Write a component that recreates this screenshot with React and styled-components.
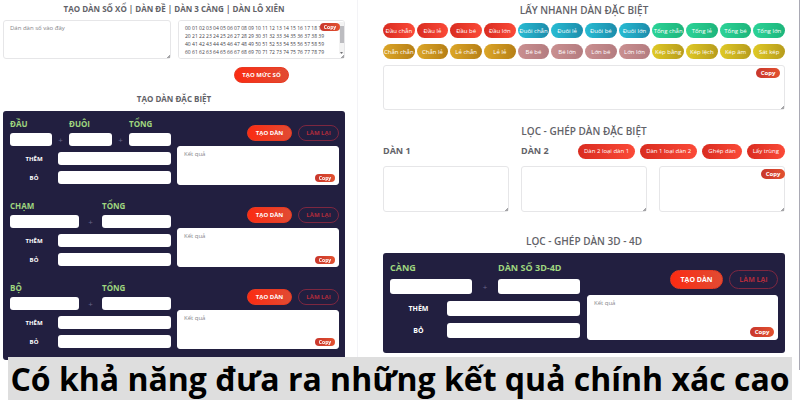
import { useState } from "react";
import styled, { createGlobalStyle } from "styled-components";

const GlobalStyle = createGlobalStyle`
  * {
    box-sizing: border-box;
  }
  body {
    margin: 0;
    background: #fff;
    color: #626268;
    font-family: "Open Sans", "Noto Sans", sans-serif;
  }
  button, input, textarea {
    font-family: inherit;
    margin: 0;
  }
`

const Columns = styled.main`
  display: grid;
  grid-template-columns: 358fr 442fr;
`

const LeftColumn = styled.div`
  padding: 0 12px 10px 3px;
  border-right: 1px solid #f3f3f6;
`

const RightColumn = styled.div`
  padding: 0 14px 0 25px;
  border-right: 1px solid #a9a9b4;
`

const Title = styled.h2`
  margin: 0;
  padding-top: ${({ $top }) => $top || 0}px;
  font-size: ${({ $large }) => ($large ? 10 : 8)}px;
  line-height: 16px;
  font-weight: ${({ $large }) => ($large ? 600 : 700)};
  text-align: center;
  white-space: nowrap;
`

const Row = styled.div`
  display: flex;
  align-items: center;
  justify-content: ${({ $justify }) => $justify || "flex-start"};
  gap: ${({ $gap }) => $gap || 0}px;
  margin-top: ${({ $top }) => $top || 0}px;
`

const Halves = styled.div`
  display: grid;
  grid-template-columns: 168fr 167fr;
  gap: 8px 7px;
  margin-top: 3px;
`

const BoxWrap = styled.div`
  position: relative;
  display: flex;
  flex: 1;
  min-width: 0;
  margin-top: ${({ $top }) => $top || 0}px;
`

const Area = styled.textarea`
  width: 100%;
  height: ${({ $height }) => $height}px;
  padding: 3px 6px;
  border: 1px solid ${({ $dark }) => ($dark ? "#fff" : "#e6e6e8")};
  border-radius: 3px;
  background: #fff;
  color: #44444a;
  font-size: ${({ $dense }) => ($dense ? 5 : 6)}px;
  line-height: 8px;
  resize: ${({ $dark }) => ($dark ? "none" : "vertical")};
  outline: none;

  &::placeholder {
    color: #85858a;
    opacity: 1;
  }
  &::-webkit-resizer {
    background: linear-gradient(135deg, transparent 87%, #a5a5a8 87%);
  }
`

const ScrollTrack = styled.span`
  position: absolute;
  top: 2px;
  right: 1px;
  bottom: 5px;
  display: flex;
  flex-direction: column;
  align-items: center;
  justify-content: space-between;
  width: 5px;
  padding-top: 4px;
  background: #f3f3f3;
  pointer-events: none;
`

const ScrollThumb = styled.span`
  width: 4px;
  height: 17px;
  background: #bcbcc0;
`

const CopyButton = styled.button`
  position: absolute;
  right: ${({ $right }) => $right}px;
  ${({ $low }) => ($low ? "bottom: 3px;" : "top: 3px;")}
  width: ${({ $small }) => ($small ? 20 : 24)}px;
  height: ${({ $small }) => ($small ? 8 : 10)}px;
  padding: 0;
  border: 0;
  border-radius: 5px;
  background: linear-gradient(90deg, #c8362c, #e2512f);
  color: #fff;
  font-size: ${({ $small }) => ($small ? 5 : 6)}px;
  line-height: 8px;
  font-weight: 700;
`

const MainButton = styled.button`
  width: ${({ $width }) => $width}px;
  height: ${({ $height }) => $height || 16}px;
  padding: 0;
  border: 1px solid ${({ $ghost }) => ($ghost ? "#7d2740" : "#e83a22")};
  border-radius: 10px;
  background: ${({ $ghost }) => ($ghost ? "transparent" : "linear-gradient(90deg, #fb2b12, #e14b33)")};
  color: ${({ $ghost }) => ($ghost ? "#b02c3c" : "#fff")};
  font-size: ${({ $size }) => $size || 6}px;
  line-height: 8px;
  font-weight: 700;
  white-space: nowrap;
`

const CenteredButton = styled(MainButton)`
  grid-column: 2;
  justify-self: center;
`

const PillGrid = styled.div`
  display: grid;
  grid-template-columns: repeat(12, 1fr);
  gap: 6px 2px;
  margin-top: 5px;
`

const pillColors = {
  red: "linear-gradient(90deg, #d92c20, #fb4a38)",
  blue: "linear-gradient(90deg, #27bcd3, #1c8cab)",
  green: "linear-gradient(90deg, #2bd397, #1db57b)",
  gold: "linear-gradient(90deg, #dca628, #b67f16)",
  rose: "linear-gradient(90deg, #c98f90, #b47c80)",
  yellow: "linear-gradient(90deg, #dfc926, #b79c1c)",
}

const Pill = styled.button`
  height: 15px;
  padding: 0 ${({ $pad }) => $pad || 0}px;
  border: 0;
  border-radius: 8px;
  background: ${({ $color }) => pillColors[$color]};
  color: #fff;
  font-size: 6px;
  line-height: 8px;
  white-space: nowrap;
`

const ListGrid = styled.div`
  display: grid;
  grid-template-columns: repeat(3, 1fr);
  column-gap: 12px;
  margin-top: 7px;
`

const ListHead = styled.div`
  display: grid;
  grid-template-columns: 138fr 57fr 207fr;
  align-items: center;
  margin-top: 4px;
`

const ListLabel = styled.label`
  font-size: 9px;
  line-height: 16px;
  font-weight: 700;
`

const Panel = styled.section`
  display: grid;
  gap: 8px;
  margin-top: 4px;
  padding: ${({ $large }) => ($large ? "8px 7px 13px" : "7px 6px 4px 7px")};
  border-radius: 3px;
  background: #221f40;
`

const Group = styled.div`
  display: grid;
  grid-template-columns: ${({ $large }) => ($large ? "190fr 191fr" : "161fr 162fr")};
  column-gap: ${({ $large }) => ($large ? 7 : 6)}px;
  min-height: ${({ $large }) => ($large ? 0 : 74)}px;
`

const FieldRow = styled.div`
  display: grid;
  grid-template-columns: ${({ $count, $large }) => {
    if ($large) return "82fr 26fr 82fr"
    return $count === 3 ? "42fr 17fr 43fr 17fr 42fr" : "69fr 23fr 69fr"
  }};
  align-items: end;
`

const Field = styled.div`
  display: grid;
  min-width: 0;
`

const FieldLabel = styled.label`
  color: #9fd67f;
  font-size: ${({ $large }) => ($large ? 9 : 8)}px;
  line-height: ${({ $large }) => ($large ? 14 : 12)}px;
  margin-bottom: ${({ $large }) => ($large ? 4 : 3)}px;
  font-weight: 700;
  white-space: nowrap;
`

const Input = styled.input`
  width: 100%;
  min-width: 0;
  height: ${({ $large }) => ($large ? 15 : 13)}px;
  padding: 0 4px;
  border: 0;
  border-radius: 3px;
  background: #fff;
  font-size: 6px;
`

const Plus = styled.span`
  color: #68658a;
  font-size: 8px;
  line-height: ${({ $large }) => ($large ? 15 : 13)}px;
  text-align: center;
`

const SideRow = styled.div`
  display: grid;
  grid-template-columns: ${({ $large }) => ($large ? "57fr 133fr" : "48fr 113fr")};
  align-items: center;
  margin-top: ${({ $large }) => ($large ? 7 : 6)}px;
`

const SideLabel = styled.label`
  color: #fff;
  font-size: ${({ $large }) => ($large ? 7 : 6)}px;
  line-height: 8px;
  font-weight: 700;
  text-align: center;
`

const Caption = styled.h1`
  position: relative;
  margin: -13px 8px 0;
  background: #dedede;
  color: #000;
  font-family: "Open Sans", "Noto Sans", sans-serif;
  font-size: 32px;
  line-height: 43px;
  font-weight: 700;
  text-align: center;
  white-space: nowrap;
`

const quickPicks = [
  ["Đầu chẵn", "red"],
  ["Đầu lẻ", "red"],
  ["Đầu bé", "red"],
  ["Đầu lớn", "red"],
  ["Đuôi chẵn", "blue"],
  ["Đuôi lẻ", "blue"],
  ["Đuôi bé", "blue"],
  ["Đuôi lớn", "blue"],
  ["Tổng chẵn", "green"],
  ["Tổng lẻ", "green"],
  ["Tổng bé", "green"],
  ["Tổng lớn", "green"],
  ["Chẵn chẵn", "gold"],
  ["Chẵn lẻ", "gold"],
  ["Lẻ chẵn", "gold"],
  ["Lẻ lẻ", "gold"],
  ["Bé bé", "rose"],
  ["Bé lớn", "rose"],
  ["Lớn bé", "rose"],
  ["Lớn lớn", "rose"],
  ["Kép bằng", "yellow"],
  ["Kép lệch", "yellow"],
  ["Kép âm", "yellow"],
  ["Sát kép", "yellow"],
]

const groups = [
  { id: "dau", fields: ["ĐẦU", "ĐUÔI", "TỔNG"] },
  { id: "cham", fields: ["CHẠM", "TỔNG"] },
  { id: "bo", fields: ["BỘ", "TỔNG"] },
]

// 00..99, twenty numbers on each line
const allNumbers = [0, 20, 40, 60, 80]
  .map((start) => Array.from({ length: 20 }, (_, i) => String(start + i).padStart(2, "0")).join(" "))
  .join("\n")

const FormGroup = ({ id, fields, large }) => (
  <Group $large={large}>
    <div>
      <FieldRow $count={fields.length} $large={large}>
        {fields.map((name, i) => [
          i > 0 && <Plus key={`plus-${i}`} $large={large}>+</Plus>,
          <Field key={name}>
            <FieldLabel htmlFor={`${id}-${i}`} $large={large}>{name}</FieldLabel>
            <Input id={`${id}-${i}`} $large={large} />
          </Field>,
        ])}
      </FieldRow>
      <SideRow $large={large}>
        <SideLabel htmlFor={`${id}-them`} $large={large}>THÊM</SideLabel>
        <Input id={`${id}-them`} $large={large} />
      </SideRow>
      <SideRow $large={large}>
        <SideLabel htmlFor={`${id}-bo`} $large={large}>BỎ</SideLabel>
        <Input id={`${id}-bo`} $large={large} />
      </SideRow>
    </div>
    <div>
      <Row $justify="flex-end" $gap={6} $top={large ? 9 : 7}>
        <MainButton $width={large ? 53 : 45} $height={large ? 19 : 16} $size={large ? 7 : 6}>TẠO DÀN</MainButton>
        <MainButton $ghost $width={large ? 49 : 41} $height={large ? 19 : 16} $size={large ? 7 : 6}>LÀM LẠI</MainButton>
      </Row>
      <BoxWrap $top={large ? 6 : 5}>
        <Area $dark $height={large ? 45 : 39} placeholder="Kết quả" aria-label={`Kết quả ${fields[0]}`} />
        <CopyButton $low $right={4} $small={!large}>Copy</CopyButton>
      </BoxWrap>
    </div>
  </Group>
)

const App = () => {
  const [numbers, setNumbers] = useState(allNumbers)

  return (
    <>
      <GlobalStyle />
      <Columns>
        <LeftColumn>
          <Title $top={1}>TẠO DÀN SỐ XỔ | DÀN ĐỀ | DÀN 3 CÀNG | DÀN LÔ XIÊN</Title>
          <Halves>
            <Area $height={39} placeholder="Dán dàn số vào đây" aria-label="Dàn số" />
            <BoxWrap>
              <Area $dense $height={39} value={numbers} onChange={(e) => setNumbers(e.target.value)} aria-label="Kết quả dàn số" wrap="off" />
              <ScrollTrack aria-hidden="true">
                <ScrollThumb />
                <svg width="3" height="2" viewBox="0 0 3 2">
                  <path d="M0 0h3L1.5 2z" fill="#707074" />
                </svg>
              </ScrollTrack>
              <CopyButton $right={5} $small>Copy</CopyButton>
            </BoxWrap>
            <CenteredButton $width={55}>TẠO MỨC SỐ</CenteredButton>
          </Halves>
          <Title $top={8}>TẠO DÀN ĐẶC BIỆT</Title>
          <Panel>
            {groups.map((group) => (
              <FormGroup key={group.id} {...group} />
            ))}
          </Panel>
        </LeftColumn>

        <RightColumn>
          <Title $top={2} $large>LẤY NHANH DÀN ĐẶC BIỆT</Title>
          <PillGrid>
            {quickPicks.map(([name, color]) => (
              <Pill key={name} $color={color}>{name}</Pill>
            ))}
          </PillGrid>
          <BoxWrap $top={6}>
            <Area $height={45} aria-label="Dàn đặc biệt" />
            <CopyButton $right={5}>Copy</CopyButton>
          </BoxWrap>

          <Title $top={13} $large>LỌC - GHÉP DÀN ĐẶC BIỆT</Title>
          <ListHead>
            <ListLabel htmlFor="dan-1">DÀN 1</ListLabel>
            <ListLabel htmlFor="dan-2">DÀN 2</ListLabel>
            <Row $justify="space-between">
              <Pill $color="red" $pad={6}>Dàn 2 loại dàn 1</Pill>
              <Pill $color="red" $pad={6}>Dàn 1 loại dàn 2</Pill>
              <Pill $color="red" $pad={6}>Ghép dàn</Pill>
              <Pill $color="red" $pad={6}>Lấy trùng</Pill>
            </Row>
          </ListHead>
          <ListGrid>
            <Area id="dan-1" $height={46} />
            <Area id="dan-2" $height={46} />
            <BoxWrap>
              <Area $height={46} aria-label="Kết quả lọc ghép" />
              <CopyButton $right={0}>Copy</CopyButton>
            </BoxWrap>
          </ListGrid>

          <Title $top={21} $large>LỌC - GHÉP DÀN 3D - 4D</Title>
          <Panel $large>
            <FormGroup large id="cang" fields={["CÀNG", "DÀN SỐ 3D-4D"]} />
          </Panel>
        </RightColumn>
      </Columns>
      <Caption>Có khả năng đưa ra những kết quả chính xác cao</Caption>
    </>
  )
}

export default App
